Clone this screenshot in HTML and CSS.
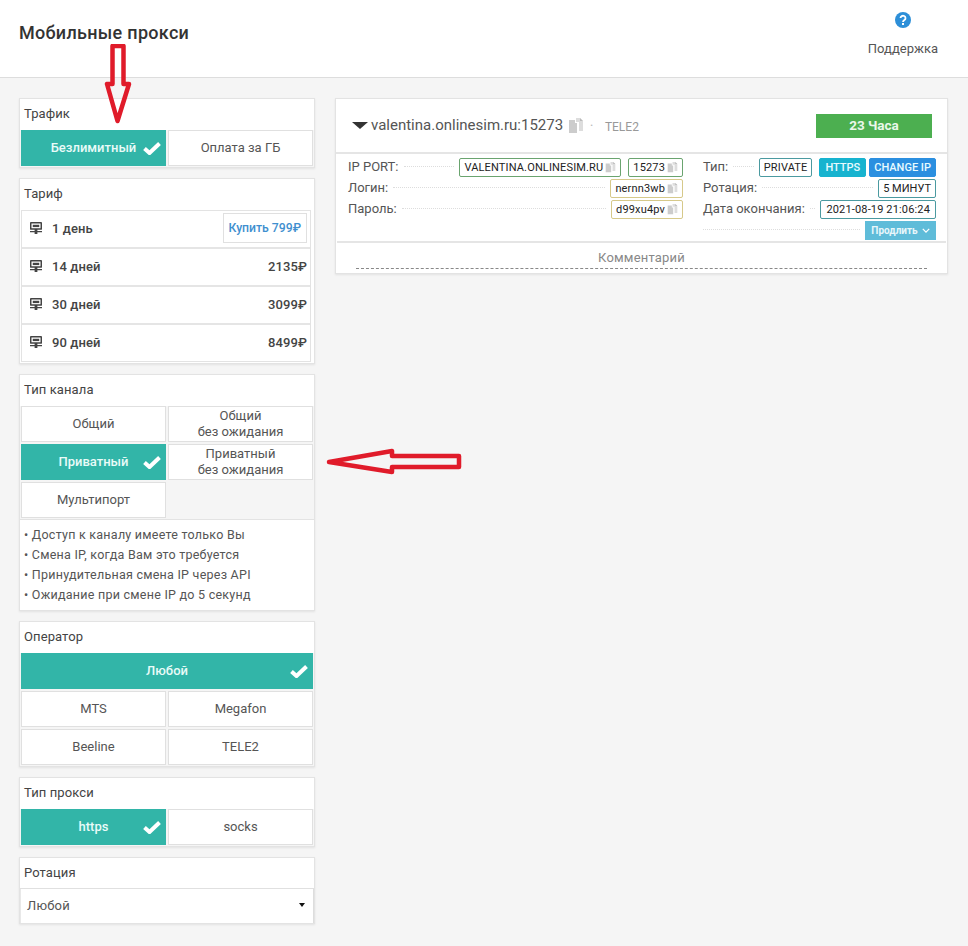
FILE: index.html
```html
<!DOCTYPE html>
<html lang="ru">
<head>
<meta charset="utf-8">
<title>Мобильные прокси</title>
<link rel="stylesheet" href="styles.css">
</head>
<body>
<svg width="0" height="0" class="defs">
  <symbol id="check" viewBox="0 0 18 14"><path d="M1.500 7.500 6.500 12 16.500 2.500" fill="none" stroke="#fff" stroke-width="4"/></symbol>
  <symbol id="srv" viewBox="0 0 13 13"><path fill="#444" fill-rule="evenodd" d="M1 0h11a1 1 0 0 1 1 1v6.500a1 1 0 0 1-1 1H8v1.200h5V11H8v2H5v-2H0V9.700h5V8.500H1a1 1 0 0 1-1-1V1a1 1 0 0 1 1-1Zm.6 1.600v5.300h9.800V1.600Z"/><rect x="3" y="3" width="7" height="2.500" fill="#444"/></symbol>
  <symbol id="copy" viewBox="0 0 16 16"><path fill="#ccc" d="M1 2h6v3h2v10H1Z"/><path fill="#ddd" d="M8 0h4l3 3v10h-4V4H8Z"/><path fill="#bbb" d="M12 0l3 3h-3Z"/></symbol>
</svg>
<header class="topbar">
  <h1 class="title">Мобильные прокси</h1>
  <div class="support">
    <svg class="support-icon" viewBox="0 0 16 16"><circle cx="8" cy="8" r="8" fill="#2d8fd8"/><path d="M5.500 6.100a2.500 2.300 0 1 1 3.900 1.900c-1 .7-1.400 1-1.400 1.900" fill="none" stroke="#fff" stroke-width="1.800"/><rect x="7" y="11" width="2" height="2" fill="#fff"/></svg>
    <span>Поддержка</span>
  </div>
</header>
<main class="layout">
  <aside class="side">
    <section class="panel">
      <h2 class="panel-title">Трафик</h2>
      <div class="opts">
        <div class="opt on">Безлимитный<svg class="chk"><use href="#check"/></svg></div>
        <div class="opt">Оплата за ГБ</div>
      </div>
    </section>
    <section class="panel">
      <h2 class="panel-title">Тариф</h2>
      <div class="tariffs">
        <div class="tariff"><svg class="srv"><use href="#srv"/></svg><span class="days">1 день</span><span class="buy">Купить 799₽</span></div>
        <div class="tariff"><svg class="srv"><use href="#srv"/></svg><span class="days">14 дней</span><span class="price">2135₽</span></div>
        <div class="tariff"><svg class="srv"><use href="#srv"/></svg><span class="days">30 дней</span><span class="price">3099₽</span></div>
        <div class="tariff"><svg class="srv"><use href="#srv"/></svg><span class="days">90 дней</span><span class="price">8499₽</span></div>
      </div>
    </section>
    <section class="panel">
      <h2 class="panel-title">Тип канала</h2>
      <div class="opts">
        <div class="opt">Общий</div>
        <div class="opt">Общий<br>без ожидания</div>
        <div class="opt on">Приватный<svg class="chk"><use href="#check"/></svg></div>
        <div class="opt">Приватный<br>без ожидания</div>
        <div class="opt">Мультипорт</div>
      </div>
      <ul class="notes">
        <li>Доступ к каналу имеете только Вы</li>
        <li>Смена IP, когда Вам это требуется</li>
        <li>Принудительная смена IP через API</li>
        <li>Ожидание при смене IP до 5 секунд</li>
      </ul>
    </section>
    <section class="panel">
      <h2 class="panel-title">Оператор</h2>
      <div class="opts">
        <div class="opt on wide">Любой<svg class="chk"><use href="#check"/></svg></div>
        <div class="opt">MTS</div>
        <div class="opt">Megafon</div>
        <div class="opt">Beeline</div>
        <div class="opt">TELE2</div>
      </div>
    </section>
    <section class="panel">
      <h2 class="panel-title">Тип прокси</h2>
      <div class="opts">
        <div class="opt on">https<svg class="chk"><use href="#check"/></svg></div>
        <div class="opt">socks</div>
      </div>
    </section>
    <section class="panel">
      <h2 class="panel-title select-title">Ротация</h2>
      <div class="select">Любой<i class="caret"></i></div>
    </section>
  </aside>
  <section class="panel proxy">
    <div class="proxy-head">
      <i class="tri"></i>
      <span class="host">valentina.onlinesim.ru:15273</span>
      <svg class="copy-lg"><use href="#copy"/></svg>
      <span class="dot">•</span>
      <span class="oper">TELE2</span>
      <span class="time">23 Часа</span>
    </div>
    <div class="proxy-body">
      <div class="col col-l">
        <div class="row"><span class="lbl">IP PORT:</span><i class="lead"></i><span class="tag green gap-r">VALENTINA.ONLINESIM.RU<svg class="copy"><use href="#copy"/></svg></span><span class="tag green">15273<svg class="copy"><use href="#copy"/></svg></span></div>
        <div class="row"><span class="lbl">Логин:</span><i class="lead"></i><span class="tag yellow">nernn3wb<svg class="copy"><use href="#copy"/></svg></span></div>
        <div class="row"><span class="lbl">Пароль:</span><i class="lead"></i><span class="tag yellow">d99xu4pv<svg class="copy"><use href="#copy"/></svg></span></div>
      </div>
      <div class="col col-r">
        <div class="row"><span class="lbl">Тип:</span><i class="lead lead-short"></i><span class="tag teal gap-r">PRIVATE</span><span class="tag fill cyan tight wide-pad">HTTPS</span><span class="tag fill blue tight">CHANGE IP</span></div>
        <div class="row"><span class="lbl">Ротация:</span><i class="lead"></i><span class="tag teal tight">5 МИНУТ</span></div>
        <div class="row"><span class="lbl">Дата окончания:</span><i class="lead"></i><span class="tag teal wide-pad">2021-08-19 21:06:24</span></div>
        <div class="row"><i class="lead"></i><span class="extend">Продлить<svg class="chev" viewBox="0 0 10 6"><path d="M1 1l4 4 4-4" fill="none" stroke="#fff" stroke-width="1.600"/></svg></span></div>
      </div>
    </div>
    <div class="comment"><span class="comment-text">Комментарий</span></div>
  </section>
</main>
<svg class="arrow arrow-down" viewBox="0 0 28 82"><path d="M8.500 2H19.500V40H25L13.500 77 3 40H8.500Z" fill="none" stroke="#e01b2a" stroke-width="4.500" stroke-linejoin="round"/></svg>
<svg class="arrow arrow-left" viewBox="0 0 138 28"><path d="M4 14 67 3V8H134V19H67V24Z" fill="none" stroke="#e01b2a" stroke-width="4.500" stroke-linejoin="round"/></svg>
</body>
</html>
```
FILE: styles.css
```css
* { box-sizing: border-box; }
html, body { margin: 0; padding: 0; }
body {
  position: relative;
  height: 946px;
  overflow: hidden;
  background: #f5f5f5;
  font-family: Roboto, "Liberation Sans", sans-serif;
  font-size: 13px;
  color: #444;
}
.defs { position: absolute; }
.topbar {
  height: 78px;
  background: #fff;
  border-bottom: 1px solid #ddd;
  display: flex;
  justify-content: space-between;
  padding: 0 30px 0 19px;
}
.title { margin: 22px 0 0; font-size: 18px; line-height: 21px; font-weight: 500; color: #333; letter-spacing: .3px; }
.support { display: flex; flex-direction: column; align-items: center; padding-top: 12px; color: #555; }
.support-icon { width: 16px; height: 16px; margin-bottom: 13px; display: block; }
.support span { line-height: 15px; }
.layout {
  display: grid;
  grid-template-columns: 296px 613px;
  column-gap: 20px;
  align-items: start;
  padding: 20px 0 0 19px;
}
.side { display: flex; flex-direction: column; gap: 10px; }
.panel {
  background: #fff;
  border: 1px solid #e3e3e3;
  box-shadow: 0 1px 2px rgba(0,0,0,.08);
}
.panel-title { margin: 0; height: 31px; padding: 0 4px; font-size: 13px; font-weight: 400; line-height: 30px; color: #444; letter-spacing: .1px; }
.opts { display: grid; grid-template-columns: 145px 145px; gap: 2px; padding: 0 1px 1px; background: #f5f5f5; width: 294px; }
.opt {
  position: relative;
  height: 36px;
  display: flex;
  align-items: center;
  justify-content: center;
  text-align: center;
  line-height: 16px;
  background: #fff;
  border: 1px solid #e0e0e0;
  color: #555;
}
.opt.on { background: #32b5a8; border-color: #32b5a8; color: #e9fbf8; font-weight: 500; }
.opt.wide { grid-column: span 2; }
.chk { position: absolute; right: 4px; top: 10px; width: 18px; height: 14px; }
.tariffs { margin: 0 1px 1px; border: 1px solid #e3e3e3; width: 290px; background: #e5e5e5; display: flex; flex-direction: column; gap: 2px; }
.tariff { height: 36px; background: #fff; display: flex; align-items: center; padding: 0 3px 2px 8px; font-weight: 500; color: #444; letter-spacing: .1px; }
.srv { width: 12px; height: 12px; flex: none; margin-right: 10px; }
.days { flex: 1; }
.price { color: #444; }
.buy { height: 30px; line-height: 28px; padding: 0 5px; border: 1px solid #e0e0e0; color: #3f8fcf; font-size: 12.200px; font-weight: 500; letter-spacing: 0; }
.notes { list-style: none; margin: 0; padding: 5px 4px 5px; border-top: 1px solid #e3e3e3; background: #fff; font-size: 12.500px; color: #555; letter-spacing: .25px; }
.notes li { height: 20px; line-height: 20px; }
.notes li::before { content: "• "; }
.select-title { height: 30px; }
.select { height: 35px; display: flex; justify-content: space-between; align-items: center; padding: 0 8px 2px 7px; border-top: 1px solid #e0e0e0; border-right: 1px solid #ddd; box-shadow: inset 1px 0 0 #e8e8e8; color: #555; letter-spacing: .2px; }
.caret { width: 0; height: 0; border: 3.500px solid transparent; border-top: 4px solid #111; border-bottom: 0; }
.proxy { height: 176px; }
.proxy-head { height: 55px; display: flex; align-items: center; padding: 0 15px 0 16px; border-bottom: 2px solid #e5e5e5; }
.tri { width: 0; height: 0; border: 8px solid transparent; border-top: 7px solid #333; border-bottom: 0; margin-right: 3px; }
.host { font-size: 15px; color: #555; margin-top: -1px; }
.copy-lg { width: 16px; height: 16px; margin-left: 5px; }
.dot { margin: 0 12px 0 6px; color: #bbb; font-size: 8px; }
.oper { color: #999; font-size: 12px; margin-top: 2px; }
.time { margin-left: auto; width: 116px; height: 24px; line-height: 23px; background: #4caf50; color: #eaf7ea; text-align: center; font-weight: 700; font-size: 13.500px; }
.proxy-body { height: 89px; padding: 4px 11px 0 11px; display: grid; grid-template-columns: 335px 233px; column-gap: 20px; margin: 0 1px; border-bottom: 2px solid #e5e5e5; }
.col { display: flex; flex-direction: column; gap: 2px; }
.row { height: 19px; display: flex; align-items: center; gap: 5px; }
.lbl { color: #555; font-size: 13px; flex: none; margin-top: -2px; }
.lead { flex: 1; border-top: 1px dotted #ddd; margin-top: -2px; }
.lead-short { flex: 1 1 19px; }
.tag {
  height: 19px;
  display: inline-flex;
  align-items: center;
  padding: 0 4px;
  font-size: 11px;
  line-height: 17px;
  color: #222;
  background: #fff;
  border: 1px solid #999;
  border-radius: 2px;
  letter-spacing: .15px;
  white-space: nowrap;
}
.wide-pad { padding: 0 5px; }
.tight { letter-spacing: 0; }
.green { border-color: #6aa46f; }
.yellow { border-color: #d6c98a; }
.teal { border-color: #4b9aa0; }
.gap-r { margin-right: 2px; }
.fill { color: #e8fbff; font-weight: 500; }
.cyan { background: #17b3cf; border-color: #17b3cf; }
.blue { background: #2b8fe0; border-color: #2b8fe0; margin-left: -2px; }
.copy { width: 11px; height: 11px; margin-left: 2px; }
.extend { height: 19px; width: 71px; flex: none; display: flex; align-items: center; justify-content: center; gap: 4px; background: #5fbcd9; color: #e8f7fb; font-size: 10px; font-weight: 700; }
.chev { width: 8px; height: 5px; }
.comment { height: 26px; margin: 0 20px; padding-top: 2px; border-bottom: 1px dashed #888; text-align: center; line-height: 26px; color: #888; letter-spacing: .2px; }
.arrow { position: absolute; display: block; }
.arrow-down { left: 104px; top: 44px; width: 28px; height: 82px; }
.arrow-left { left: 325px; top: 448px; width: 138px; height: 28px; }
```
